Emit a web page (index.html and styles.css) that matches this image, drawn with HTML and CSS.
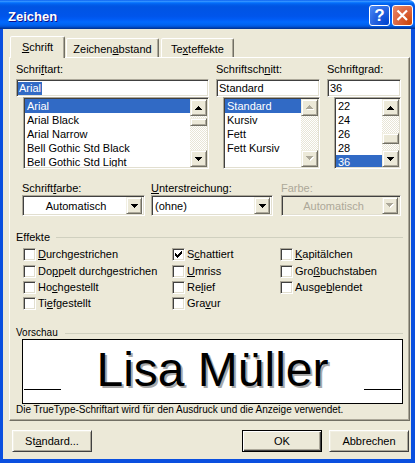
FILE: index.html
```html
<!DOCTYPE html>
<html lang="de">
<head>
    <meta charset="UTF-8">
    <title>Zeichen</title>
    <link rel="stylesheet" href="styles.css">
</head>
<body>
<div class="window">
    <div class="titlebar">
        <span class="title">Zeichen</span>
        <span class="cap-btn help">?</span>
        <span class="cap-btn close">
            <svg width="19" height="19" viewBox="0 0 19 19"><path d="M4.5 4.5L14 14M14 4.5L4.5 14" stroke="#fff" stroke-width="2.2"/></svg>
        </span>
    </div>
    <div class="frame">
        <div class="client">
            <div class="tabs">
                <div class="tab active tab-1"><u>S</u>chrift</div>
                <div class="tab tab-2">Zeichen<u>a</u>bstand</div>
                <div class="tab tab-3">Te<u>x</u>teffekte</div>
            </div>

            <div class="panel">
                <!-- Schriftart / Schriftschnitt / Schriftgrad -->
                <div class="font-row">
                    <div class="col col-name">
                        <span class="field-label">Schri<u>f</u>tart:</span>
                        <div class="textbox"><span class="sel">Arial</span></div>
                        <div class="listbox">
                            <ul class="items">
                                <li class="selected">Arial</li>
                                <li>Arial Black</li>
                                <li>Arial Narrow</li>
                                <li>Bell Gothic Std Black</li>
                                <li>Bell Gothic Std Light</li>
                            </ul>
                            <div class="scrollbar">
                                <div class="sb-btn"><svg width="7" height="4" viewBox="0 0 7 4"><path d="M3 0h1v1H3zM2 1h3v1H2zM1 2h5v1H1zM0 3h7v1H0z"/></svg></div>
                                <div class="sb-track"><div class="thumb thumb-top"></div></div>
                                <div class="sb-btn"><svg width="7" height="4" viewBox="0 0 7 4"><path d="M0 0h7v1H0zM1 1h5v1H1zM2 2h3v1H2zM3 3h1v1H3z"/></svg></div>
                            </div>
                        </div>
                    </div>
                    <div class="col col-style">
                        <span class="field-label">Schriftsch<u>n</u>itt:</span>
                        <div class="textbox">Standard</div>
                        <div class="listbox">
                            <ul class="items">
                                <li class="selected">Standard</li>
                                <li>Kursiv</li>
                                <li>Fett</li>
                                <li>Fett Kursiv</li>
                            </ul>
                            <div class="scrollbar">
                                <div class="sb-btn disabled"><svg width="8" height="5" viewBox="0 0 8 5"><path class="hl" d="M4 1h1v1H4zM3 2h3v1H3zM2 3h5v1H2zM1 4h7v1H1z"/><path d="M3 0h1v1H3zM2 1h3v1H2zM1 2h5v1H1zM0 3h7v1H0z"/></svg></div>
                                <div class="sb-track"></div>
                                <div class="sb-btn disabled"><svg width="8" height="5" viewBox="0 0 8 5"><path class="hl" d="M1 1h7v1H1zM2 2h5v1H2zM3 3h3v1H3zM4 4h1v1H4z"/><path d="M0 0h7v1H0zM1 1h5v1H1zM2 2h3v1H2zM3 3h1v1H3z"/></svg></div>
                            </div>
                        </div>
                    </div>
                    <div class="col col-size">
                        <span class="field-label">Schrift<u>g</u>rad:</span>
                        <div class="textbox">36</div>
                        <div class="listbox">
                            <ul class="items">
                                <li>22</li>
                                <li>24</li>
                                <li>26</li>
                                <li>28</li>
                                <li class="selected">36</li>
                            </ul>
                            <div class="scrollbar">
                                <div class="sb-btn"><svg width="7" height="4" viewBox="0 0 7 4"><path d="M3 0h1v1H3zM2 1h3v1H2zM1 2h5v1H1zM0 3h7v1H0z"/></svg></div>
                                <div class="sb-track"><div class="thumb thumb-low"></div></div>
                                <div class="sb-btn"><svg width="7" height="4" viewBox="0 0 7 4"><path d="M0 0h7v1H0zM1 1h5v1H1zM2 2h3v1H2zM3 3h1v1H3z"/></svg></div>
                            </div>
                        </div>
                    </div>
                </div>

                <!-- Farbe / Unterstreichung -->
                <div class="combo-row">
                    <div class="col combo-col-1">
                        <span class="field-label">Schrift<u>f</u>arbe:</span>
                        <div class="combo">
                            <span class="combo-text center">Automatisch</span>
                            <span class="combo-btn"><svg width="7" height="4" viewBox="0 0 7 4"><path d="M0 0h7v1H0zM1 1h5v1H1zM2 2h3v1H2zM3 3h1v1H3z"/></svg></span>
                        </div>
                    </div>
                    <div class="col combo-col-2">
                        <span class="field-label"><u>U</u>nterstreichung:</span>
                        <div class="combo">
                            <span class="combo-text">(ohne)</span>
                            <span class="combo-btn"><svg width="7" height="4" viewBox="0 0 7 4"><path d="M0 0h7v1H0zM1 1h5v1H1zM2 2h3v1H2zM3 3h1v1H3z"/></svg></span>
                        </div>
                    </div>
                    <div class="col combo-col-3">
                        <span class="field-label disabled-text">Farbe:</span>
                        <div class="combo disabled">
                            <span class="combo-text center">Automatisch</span>
                            <span class="combo-btn"><svg width="8" height="5" viewBox="0 0 8 5"><path class="hl" d="M1 1h7v1H1zM2 2h5v1H2zM3 3h3v1H3zM4 4h1v1H4z"/><path d="M0 0h7v1H0zM1 1h5v1H1zM2 2h3v1H2zM3 3h1v1H3z"/></svg></span>
                        </div>
                    </div>
                </div>

                <!-- Effekte -->
                <div class="group-head">
                    <span>Effekte</span>
                    <span class="group-line"></span>
                </div>
                <div class="effects">
                    <div class="check"><span class="cb"></span><u>D</u>urchgestrichen</div>
                    <div class="check"><span class="cb"></span>Do<u>p</u>pelt durchgestrichen</div>
                    <div class="check"><span class="cb"></span>Ho<u>c</u>hgestellt</div>
                    <div class="check"><span class="cb"></span>Ti<u>e</u>fgestellt</div>
                    <div class="check"><span class="cb"><svg width="7" height="7" viewBox="0 0 7 7"><path d="M6 0h1v1H6zM5 1h2v1H5zM0 2h1v1H0zM4 2h3v1H4zM0 3h2v1H0zM3 3h3v1H3zM0 4h5v1H0zM1 5h3v1H1zM2 6h1v1H2z"/></svg></span>S<u>c</u>hattiert</div>
                    <div class="check"><span class="cb"></span><u>U</u>mriss</div>
                    <div class="check"><span class="cb"></span>Re<u>l</u>ief</div>
                    <div class="check"><span class="cb"></span>Gra<u>v</u>ur</div>
                    <div class="check"><span class="cb"></span><u>K</u>apitälchen</div>
                    <div class="check"><span class="cb"></span>Gro<u>ß</u>buchstaben</div>
                    <div class="check"><span class="cb"></span>Ausge<u>b</u>lendet</div>
                </div>

                <!-- Vorschau -->
                <div class="group-head preview-head">
                    <span>Vorschau</span>
                    <span class="group-line"></span>
                </div>
                <div class="preview">
                    <span class="pline"></span>
                    <span class="ptext">Lisa Müller</span>
                    <span class="pline"></span>
                </div>
                <div class="note">Die TrueType-Schriftart wird für den Ausdruck und die Anzeige verwendet.</div>
            </div>

            <div class="buttons">
                <div class="btn">St<u>a</u>ndard...</div>
                <div class="btn default btn-ok">OK</div>
                <div class="btn btn-cancel">Abbrechen</div>
            </div>
        </div>
    </div>
</div>
</body>
</html>
```

FILE: styles.css
```css
body {
    margin: 0;
    background: #fff;
    font-family: "Liberation Sans", Arial, sans-serif;
    font-size: 11px;
    color: #000;
}
u {
    text-underline-offset: 1px;
}
.window {
    width: 415px;
    height: 463px;
    display: flex;
    flex-direction: column;
}

/* title bar */
.titlebar {
    height: 29px;
    display: flex;
    align-items: flex-start;
    padding: 0 2px 0 8px;
    border-top-right-radius: 6px;
    background: linear-gradient(to bottom, #0058ee 0%, #3a93ff 4%, #288eff 6%, #127dff 8%, #036ffc 10%, #0262ee 14%, #0057e5 20%, #0054e3 24%, #0055eb 56%, #005bf5 66%, #026afe 76%, #0062ef 86%, #0052d6 92%, #0040ab 96%, #003092 100%);
}
.title {
    color: #fff;
    font-weight: bold;
    font-size: 13px;
    line-height: 15px;
    margin-top: 9px;
    text-shadow: 1px 1px #0f1089;
}
.cap-btn {
    box-sizing: border-box;
    width: 21px;
    height: 21px;
    margin-top: 5px;
    border: 1px solid #fff;
    border-radius: 3px;
    display: flex;
    align-items: center;
    justify-content: center;
}
.help {
    margin-left: auto;
    margin-right: 2px;
    color: #fff;
    font-weight: bold;
    font-size: 17px;
    line-height: 19px;
    background: radial-gradient(circle at 90% 90%, #0044d1 0%, #2663e0 55%, #4d8cf8 100%);
}
.close {
    background: radial-gradient(circle at 90% 90%, #cc4609 0%, #dc6540 55%, #e88b6c 100%);
}

/* frame + client */
.frame {
    flex: 1;
    display: flex;
    border-style: solid;
    border-color: #0a4fdf;
    border-width: 0 4px 4px 3px;
}
.client {
    flex: 1;
    background: #ece9d8;
}

/* tabs */
.tabs {
    display: flex;
    align-items: flex-end;
    height: 28px;
    padding-left: 7px;
    position: relative;
    z-index: 1;
}
.tab {
    box-sizing: border-box;
    height: 19px;
    padding-top: 4px;
    border: 1px solid;
    border-bottom: none;
    border-color: #fff #716f64 transparent #fff;
    border-radius: 2px 2px 0 0;
    box-shadow: inset -1px 0 #aca899;
    background: #ece9d8;
    text-align: center;
    white-space: nowrap;
}
.tab.active {
    height: 22px;
    margin-bottom: -1px;
}
.tab-1 { width: 55px; }
.tab-2 { width: 93px; margin-left: 1px; }
.tab-3 { width: 73px; margin-left: 2px; }

.panel {
    box-sizing: border-box;
    width: 401px;
    height: 364px;
    margin-left: 6px;
    border: 1px solid;
    border-color: #fff #716f64 #716f64 #fff;
    box-shadow: inset -1px -1px #aca899;
}

/* common controls */
.field-label {
    display: block;
    height: 13px;
    line-height: 13px;
    white-space: nowrap;
}
.disabled-text {
    color: #aca899;
}
.textbox, .listbox, .combo, .cb {
    box-sizing: border-box;
    border: 1px solid;
    border-color: #aca899 #fff #fff #aca899;
    box-shadow: inset 1px 1px #404040, inset -1px -1px #e2dfd0;
    background: #fff;
}
.textbox {
    height: 18px;
    margin-top: 3px;
    padding: 1px 0 0 2px;
    line-height: 14px;
}
.sel {
    display: inline-block;
    margin-left: -1px;
    padding: 0 1px;
    line-height: 13px;
    background: #316ac5;
    color: #fff;
}
.listbox {
    display: flex;
    height: 72px;
    margin-left: 7px;
    padding: 1px;
}
.items {
    flex: 1;
    list-style: none;
    margin: 0;
    padding: 0;
    overflow: hidden;
}
.items li {
    height: 14px;
    line-height: 14px;
    padding-left: 2px;
    white-space: nowrap;
}
.items li.selected {
    background: #316ac5;
    color: #fff;
}

/* scrollbars */
.scrollbar {
    width: 17px;
    display: flex;
    flex-direction: column;
}
.sb-btn, .thumb, .combo-btn, .btn {
    box-sizing: border-box;
    border: 1px solid;
    border-color: #f1efe2 #716f64 #716f64 #f1efe2;
    box-shadow: inset 1px 1px #fff, inset -1px -1px #aca899;
    background: #ece9d8;
}
.sb-btn {
    height: 17px;
    display: flex;
    align-items: center;
    justify-content: center;
}
.sb-btn svg, .combo-btn svg {
    fill: #000;
}
.disabled svg {
    fill: #aca899;
}
.disabled svg .hl {
    fill: #fff;
}
.sb-track {
    flex: 1;
    background: repeating-conic-gradient(#fff 0 25%, #e8e5d6 0 50%) 0 0 / 2px 2px;
}
.thumb {
    height: 8px;
}
.thumb-top {
    margin-top: 2px;
}
.thumb-low {
    height: 11px;
    margin-top: 17px;
}

/* font row */
.font-row {
    display: flex;
    gap: 7px;
    margin: 5px 0 0 6px;
}
.col-name { width: 193px; }
.col-style { width: 104px; }
.col-size { width: 74px; }

/* combo row */
.combo-row {
    display: flex;
    margin: 13px 0 0 12px;
}
.combo-col-1 { width: 123px; }
.combo-col-2 { width: 122px; margin-left: 6px; }
.combo-col-3 { width: 120px; margin-left: 8px; }
.combo {
    height: 21px;
    display: flex;
    align-items: center;
    padding: 2px;
}
.combo.disabled {
    background: #ece9d8;
    color: #aca899;
}
.combo-text {
    flex: 1;
    padding-left: 1px;
    white-space: nowrap;
}
.combo-text.center {
    text-align: center;
}
.combo-btn {
    width: 16px;
    height: 17px;
    display: flex;
    align-items: center;
    justify-content: center;
}

/* groups */
.group-head {
    display: flex;
    align-items: center;
    height: 13px;
    line-height: 13px;
    margin: 15px 6px 0 6px;
}
.group-line {
    flex: 1;
    height: 1px;
    margin-left: 6px;
    background: #d0d0bf;
}
.effects {
    display: grid;
    grid-template-columns: 149px 108px 1fr;
    grid-template-rows: 17px 16px 16px 16px;
    grid-auto-flow: column;
    margin: 4px 0 0 13px;
}
.check {
    display: flex;
    align-items: flex-start;
    line-height: 13px;
    white-space: nowrap;
}
.cb {
    width: 13px;
    height: 13px;
    margin-right: 2px;
    display: flex;
    align-items: center;
    justify-content: center;
    flex-shrink: 0;
}
.preview-head {
    margin-top: 14px;
    height: 12px;
    line-height: 12px;
    font-size: 10px;
}
.preview-head .group-line {
    margin-left: 7px;
}
.preview {
    box-sizing: border-box;
    width: 381px;
    height: 65px;
    margin-left: 12px;
    padding: 0 1px;
    border: 1px solid #000;
    background: #fff;
    display: flex;
    justify-content: space-between;
    align-items: flex-start;
}
.pline {
    width: 37px;
    height: 1px;
    margin-top: 49px;
    background: #000;
}
.ptext {
    font-family: "Liberation Sans", Arial, sans-serif;
    font-size: 48px;
    line-height: 48px;
    margin-top: 6px;
    white-space: nowrap;
    text-shadow: 2px 2px #a8a8a8;
}
.note {
    margin-left: 6px;
    height: 12px;
    line-height: 12px;
    font-size: 10px;
    white-space: nowrap;
}

/* dialog buttons */
.buttons {
    display: flex;
    margin: 9px 0 0 9px;
}
.btn {
    width: 80px;
    height: 22px;
    display: flex;
    align-items: center;
    justify-content: center;
    border-color: #fff #404040 #404040 #fff;
    box-shadow: inset 1px 1px #f1efe2, inset -1px -1px #aca899;
}
.btn.default {
    border-color: #000;
    box-shadow: inset 1px 1px #fff, inset -1px -1px #404040, inset -2px -2px #aca899;
}
.btn-ok { margin-left: 150px; }
.btn-cancel { margin-left: 7px; }
```
